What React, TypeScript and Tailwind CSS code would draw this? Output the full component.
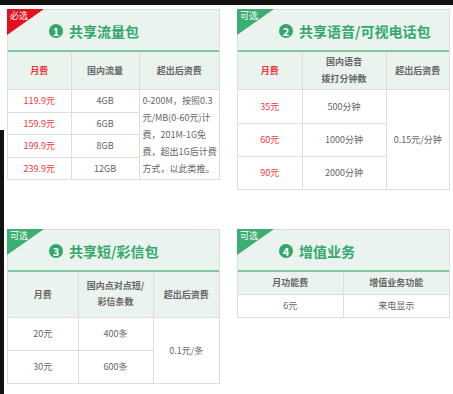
import React from 'react';

interface PanelProps {
  badge: string;
  badgeColor: string;
  num: number;
  title: string;
  children: React.ReactNode;
}

const cell = 'border border-[#dedede] text-center align-middle px-0';
const red = 'text-[#f2363a]';

// Corner badge + title strip, table below
const Panel: React.FC<PanelProps> = ({ badge, badgeColor, num, title, children }) => (
  <div className="relative w-[213px] border border-[#dedede] bg-white">
    <div className="absolute -top-px -left-px w-[37px] h-[26px]">
      <svg width="37" height="26" viewBox="0 0 37 26" className="block">
        <polygon points="0,0 37,0 0,26" fill={badgeColor} />
      </svg>
      <span className="absolute top-[2px] left-[3px] text-[9px] leading-[10px] text-white">{badge}</span>
    </div>
    <div className="h-[42px] bg-[#eaf3ee] border-b-2 border-[#80c89f] flex items-center pl-[41px] pt-[2px] gap-[6px]">
      <span className="w-[14px] h-[14px] rounded-full bg-[#33a66c] text-white text-[11px] font-bold leading-none flex items-center justify-center">
        {num}
      </span>
      <span className="text-[14px] font-bold text-[#35a86e] leading-none">{title}</span>
    </div>
    <table className="w-full table-fixed border-collapse border-hidden text-[9px] leading-[17px] text-[#666]">
      {children}
    </table>
  </div>
);

export default function App() {
  return (
    <div className="w-[453px] h-[394px] bg-white flex flex-col overflow-hidden font-['Noto_Sans_CJK_SC',sans-serif]">
      <div className="h-[5px] bg-[#111] shrink-0" />
      <div className="flex flex-1">
        {/* left edge strip */}
        <div className="w-[4px] flex flex-col shrink-0">
          <div className="h-[125px] bg-white" />
          <div className="flex-1 bg-[#111]" />
        </div>
        <div className="flex flex-col pl-[3px] pt-[4px]">
          <div className="flex items-start gap-[17px]">
            <Panel badge="必选" badgeColor="#e50f1d" num={1} title="共享流量包">
              <colgroup>
                <col className="w-[63px]" />
                <col className="w-[68px]" />
                <col />
              </colgroup>
              <tbody>
                <tr className="h-[37px] bg-[#eaf3ee] font-bold">
                  <td className={`${cell} ${red}`}>月费</td>
                  <td className={cell}>国内流量</td>
                  <td className={cell}>超出后资费</td>
                </tr>
                <tr className="h-[23px]">
                  <td className={`${cell} ${red}`}>119.9元</td>
                  <td className={cell}>4GB</td>
                  <td rowSpan={4} className={`${cell} !text-left pl-[3px] whitespace-nowrap`}>
                    0-200M，按照0.3<br />
                    元/MB(0-60元)计<br />
                    费，201M-1G免<br />
                    费，超出1G后计费<br />
                    方式，以此类推。
                  </td>
                </tr>
                <tr className="h-[22px]">
                  <td className={`${cell} ${red}`}>159.9元</td>
                  <td className={cell}>6GB</td>
                </tr>
                <tr className="h-[23px]">
                  <td className={`${cell} ${red}`}>199.9元</td>
                  <td className={cell}>8GB</td>
                </tr>
                <tr className="h-[22px]">
                  <td className={`${cell} ${red}`}>239.9元</td>
                  <td className={cell}>12GB</td>
                </tr>
              </tbody>
            </Panel>

            <Panel badge="可选" badgeColor="#3dae72" num={2} title="共享语音/可视电话包">
              <colgroup>
                <col className="w-[64px]" />
                <col className="w-[84px]" />
                <col />
              </colgroup>
              <tbody>
                <tr className="h-[37px] bg-[#eaf3ee] font-bold">
                  <td className={`${cell} ${red}`}>月费</td>
                  <td className={cell}>
                    国内语音<br />拨打分钟数
                  </td>
                  <td className={cell}>超出后资费</td>
                </tr>
                <tr className="h-[34px]">
                  <td className={`${cell} ${red}`}>35元</td>
                  <td className={cell}>500分钟</td>
                  <td rowSpan={3} className={cell}>0.15元/分钟</td>
                </tr>
                <tr className="h-[33px]">
                  <td className={`${cell} ${red}`}>60元</td>
                  <td className={cell}>1000分钟</td>
                </tr>
                <tr className="h-[33px]">
                  <td className={`${cell} ${red}`}>90元</td>
                  <td className={cell}>2000分钟</td>
                </tr>
              </tbody>
            </Panel>
          </div>

          <div className="flex items-start gap-[17px] mt-[39px]">
            <Panel badge="可选" badgeColor="#3dae72" num={3} title="共享短/彩信包">
              <colgroup>
                <col className="w-[70px]" />
                <col className="w-[75px]" />
                <col />
              </colgroup>
              <tbody>
                <tr className="h-[45px] bg-[#eaf3ee] font-bold">
                  <td className={cell}>月费</td>
                  <td className={`${cell} leading-[16px]`}>
                    国内点对点短/<br />彩信条数
                  </td>
                  <td className={cell}>超出后资费</td>
                </tr>
                <tr className="h-[33px]">
                  <td className={cell}>20元</td>
                  <td className={cell}>400条</td>
                  <td rowSpan={2} className={cell}>0.1元/条</td>
                </tr>
                <tr className="h-[33px]">
                  <td className={cell}>30元</td>
                  <td className={cell}>600条</td>
                </tr>
              </tbody>
            </Panel>

            <Panel badge="可选" badgeColor="#3dae72" num={4} title="增值业务">
              <colgroup>
                <col className="w-[105px]" />
                <col />
              </colgroup>
              <tbody>
                <tr className="h-[22px] bg-[#eaf3ee] font-bold">
                  <td className={cell}>月功能费</td>
                  <td className={cell}>增值业务功能</td>
                </tr>
                <tr className="h-[23px]">
                  <td className={cell}>6元</td>
                  <td className={cell}>来电显示</td>
                </tr>
              </tbody>
            </Panel>
          </div>
        </div>
      </div>
    </div>
  );
}
